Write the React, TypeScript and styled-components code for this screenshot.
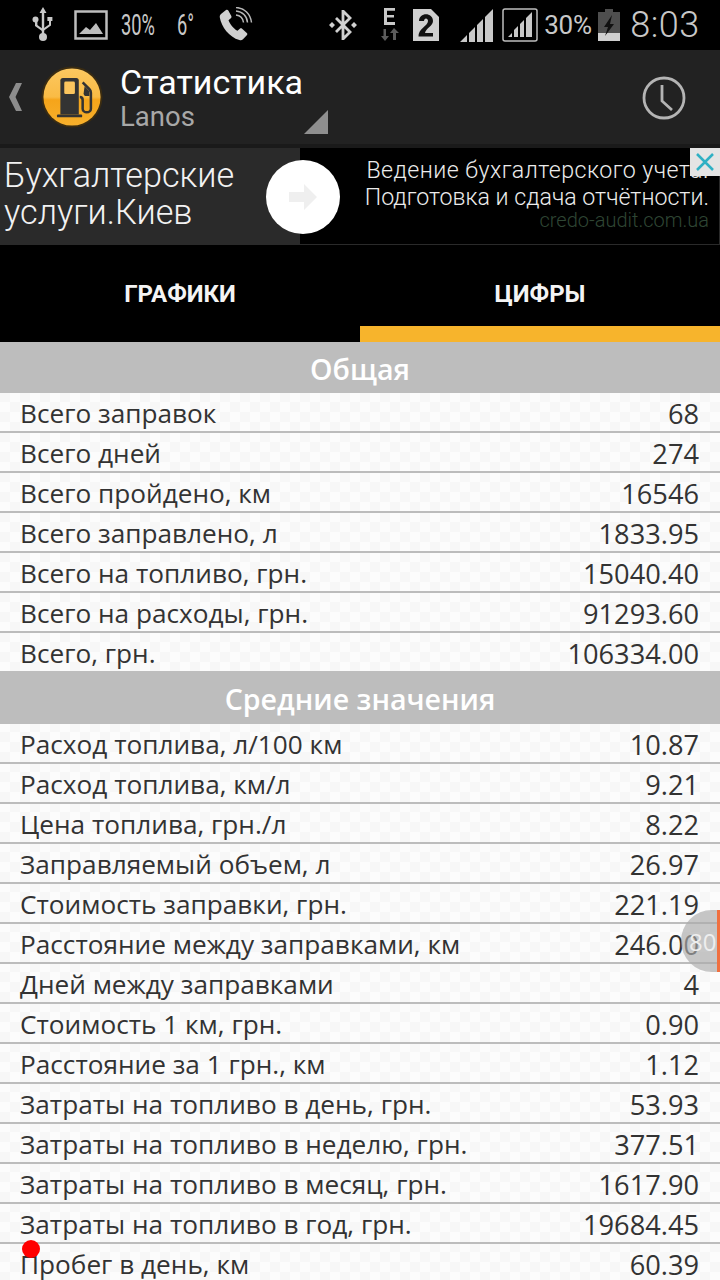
import React from 'react';
import styled, {createGlobalStyle} from 'styled-components';

const GlobalStyle = createGlobalStyle`
  html, body {
    background: #fff;
    height: 1280px;
    margin: 0;
    overflow: hidden;
    width: 720px;
  }
`;

const Page = styled.div`
  font-family: 'Open Sans', 'Liberation Sans', sans-serif;
  height: 1280px;
  overflow: hidden;
  position: relative;
  width: 720px;
`;

const StatusBar = styled.div`
  align-items: center;
  background: #000;
  color: #c8c8c8;
  display: flex;
  height: 50px;
`;

const StatusSlot = styled.div<{$left: number; $width: number}>`
  align-items: center;
  display: flex;
  flex: none;
  justify-content: center;
  margin-left: ${p => p.$left}px;
  width: ${p => p.$width}px;
`;

const NarrowText = styled.span`
  font-family: Roboto, sans-serif;
  font-size: 29px;
  transform: scaleX(.63);
  white-space: nowrap;
`;

const BatteryText = styled.span`
  font-family: Roboto, sans-serif;
  font-size: 26px;
  letter-spacing: -.3px;
`;

const Clock = styled.span`
  font-family: Roboto, sans-serif;
  font-size: 36px;
  font-weight: 300;
  letter-spacing: .5px;
`;

const ActionBar = styled.div`
  align-items: center;
  background: #222;
  display: flex;
  height: 94px;
  position: relative;
`;

const BackChevron = styled.svg`
  flex: none;
  margin-left: 8px;
`;

const AppIcon = styled.svg`
  flex: none;
  margin-left: 18px;
`;

const Titles = styled.div`
  display: flex;
  flex: 1;
  flex-direction: column;
  margin-left: 17px;
`;

const Title = styled.div`
  color: #fff;
  font-family: Roboto, sans-serif;
  font-size: 34px;
  line-height: 40px;
`;

const Subtitle = styled.div`
  color: #a8a8a8;
  font-family: Roboto, sans-serif;
  font-size: 27.5px;
  line-height: 30px;
`;

const SpinnerCorner = styled.div`
  border-bottom: 24px solid #8f8f8f;
  border-left: 24px solid transparent;
  bottom: 10px;
  height: 0;
  left: 304px;
  position: absolute;
  width: 0;
`;

const HistoryIcon = styled.svg`
  flex: none;
  margin-right: 34px;
  margin-top: 2px;
`;

const Gap = styled.div`
  background: #1a1a1a;
  height: 4px;
`;

const Ad = styled.div`
  background: #000;
  display: flex;
  font-family: Roboto, sans-serif;
  height: 97px;
  position: relative;
`;

const AdLeft = styled.div`
  background: #2a2a2a;
  color: #f2f2f2;
  font-size: 34.2px;
  font-weight: 300;
  line-height: 37px;
  padding: 9px 0 0 4px;
  width: 296px;
`;

const AdRight = styled.div`
  border: solid #2a2a2a;
  border-width: 0 1px 1px 0;
  flex: 1;
  padding: 9px 10px 0 0;
  text-align: right;
`;

const AdLine = styled.div<{$tracking?: number}>`
  color: #ececec;
  font-size: 23.2px;
  font-weight: 300;
  letter-spacing: ${p => p.$tracking || 0}px;
  line-height: 27px;
  white-space: nowrap;
`;

const AdUrl = styled.div`
  color: #2f4634;
  font-size: 20px;
  font-weight: 300;
  line-height: 18px;
`;

const AdCircle = styled.div`
  align-items: center;
  background: #fff;
  border-radius: 50%;
  display: flex;
  height: 74px;
  justify-content: center;
  left: 266px;
  position: absolute;
  top: 12px;
  width: 74px;
`;

const AdClose = styled.div`
  align-items: center;
  background: #e4e4e4;
  display: flex;
  height: 28px;
  justify-content: center;
  position: absolute;
  right: 0;
  top: 0;
  width: 30px;
`;

const Tabs = styled.div`
  background: #000;
  display: flex;
  height: 97px;
`;

const Tab = styled.div<{$active?: boolean}>`
  align-items: center;
  border-bottom: 16px solid ${p => (p.$active ? '#f7b42c' : 'transparent')};
  box-sizing: border-box;
  color: #f4f4f4;
  display: flex;
  flex: 1;
  font-family: Roboto, sans-serif;
  font-size: 24px;
  font-weight: 700;
  justify-content: center;
  padding-top: 17px;
`;

const Table = styled.div`
  background-color: #fcfcfc;
  background-image:
    linear-gradient(45deg, #f7f7f7 25%, transparent 25%, transparent 75%, #f7f7f7 75%),
    linear-gradient(45deg, #f7f7f7 25%, transparent 25%, transparent 75%, #f7f7f7 75%);
  background-position: 0 0, 10px 10px;
  background-size: 20px 20px;
`;

const SectionHeader = styled.div<{$height: number}>`
  align-items: center;
  background: #bdbdbd;
  box-sizing: border-box;
  color: #fff;
  display: flex;
  font-size: 28.6px;
  font-weight: 600;
  height: ${p => p.$height}px;
  justify-content: center;
  padding-top: 2px;
`;

const Row = styled.div`
  align-items: center;
  border-bottom: 2px solid #bcbcbc;
  box-sizing: border-box;
  color: #333;
  display: flex;
  font-size: 26.2px;
  height: 40px;
  justify-content: space-between;
  padding: 2px 21px 0 20px;
  white-space: nowrap;

  &.last {
    border-bottom: 0;
    height: 38px;
  }
`;

const RowValue = styled.span`
  font-size: 27.2px;
`;

const ScrollHandle = styled.div`
  align-items: center;
  background: rgba(170, 170, 170, .65);
  border-radius: 31px 0 0 31px;
  box-sizing: border-box;
  color: #eee;
  display: flex;
  font-size: 24px;
  height: 62px;
  left: 681px;
  padding-left: 8px;
  position: absolute;
  top: 910px;
  width: 39px;

  &::after {
    background: #f07040;
    bottom: 0;
    content: '';
    position: absolute;
    right: 0;
    top: 0;
    width: 3px;
  }
`;

const RedDot = styled.div`
  background: #f00;
  border-radius: 50%;
  height: 18px;
  left: 22px;
  position: absolute;
  top: 1240px;
  width: 18px;
`;

const general = [
  ['Всего заправок', '68'],
  ['Всего дней', '274'],
  ['Всего пройдено, км', '16546'],
  ['Всего заправлено, л', '1833.95'],
  ['Всего на топливо, грн.', '15040.40'],
  ['Всего на расходы, грн.', '91293.60'],
  ['Всего, грн.', '106334.00'],
];

const average = [
  ['Расход топлива, л/100 км', '10.87'],
  ['Расход топлива, км/л', '9.21'],
  ['Цена топлива, грн./л', '8.22'],
  ['Заправляемый объем, л', '26.97'],
  ['Стоимость заправки, грн.', '221.19'],
  ['Расстояние между заправками, км', '246.00'],
  ['Дней между заправками', '4'],
  ['Стоимость 1 км, грн.', '0.90'],
  ['Расстояние за 1 грн., км', '1.12'],
  ['Затраты на топливо в день, грн.', '53.93'],
  ['Затраты на топливо в неделю, грн.', '377.51'],
  ['Затраты на топливо в месяц, грн.', '1617.90'],
  ['Затраты на топливо в год, грн.', '19684.45'],
  ['Пробег в день, км', '60.39'],
];

function StatusIcons () {
  return (
    <StatusBar>
      <StatusSlot $left={32} $width={22}>
        <svg width="22" height="36" viewBox="0 0 22 36" fill="#c8c8c8">
          <path d="M11 0l3.5 6h-2.3v21h-2.4V6H7.5z" />
          <path d="M10 24l-7-5v-4h2.4v3l6 4.4zM12 21l5-3.6V14h-1.6v-4h5v4H19v4.4L12 23.6z" />
          <circle cx="3.5" cy="12.5" r="3" />
          <circle cx="11" cy="30" r="4" />
        </svg>
      </StatusSlot>
      <StatusSlot $left={20} $width={34}>
        <svg width="34" height="30" viewBox="0 0 34 30">
          <rect x="1.5" y="1.5" width="31" height="27" fill="none" stroke="#bdbdbd" strokeWidth="2.5" />
          <path d="M5 24l7-7 4 3 6-7 7 11z" fill="#bdbdbd" />
        </svg>
      </StatusSlot>
      <StatusSlot $left={12} $width={36}>
        <NarrowText>30%</NarrowText>
      </StatusSlot>
      <StatusSlot $left={19} $width={22}>
        <NarrowText>6°</NarrowText>
      </StatusSlot>
      <StatusSlot $left={22} $width={34}>
        <svg width="34" height="36" viewBox="0 0 34 36" fill="none">
          <path d="M2 7l5-4c1-.6 1.8-.3 2.300.5l3 5.500c.4.900.2 1.600-.5 2.200l-2.300 2c1.500 4 5 8.500 9 10.500l2.300-2c.8-.6 1.600-.6 2.300 0l4.700 4.300c.7.700.7 1.500 0 2.300l-3.800 4c-1 1-2.300 1.200-3.600.8C10 30 2.500 20 .8 10.500.6 9 1 8 2 7z" fill="#d0d0d0" />
          <path d="M17 8c4 .5 7 3.500 7.500 7.500M17 4c6.500.5 11 5 11.500 11.500M17 0.500c8.500.5 14.500 6.500 15.500 15" stroke="#b8b8b8" strokeWidth="1.500" />
        </svg>
      </StatusSlot>
      <StatusSlot $left={75} $width={30}>
        <svg width="30" height="30" viewBox="0 0 30 30" fill="none">
          <path d="M8 8l14 14-7 7V1l7 7L8 22" stroke="#d0d0d0" strokeWidth="2.800" />
          <path d="M1 15l3-3 3 3-3 3zM23 15l3-3 3 3-3 3z" fill="#d0d0d0" />
        </svg>
      </StatusSlot>
      <StatusSlot $left={23} $width={18}>
        <svg width="18" height="34" viewBox="0 0 18 34">
          <path d="M3 0h11v2.800H6v4.200h7v2.600H6v4.400h8V17H3z" fill="#c8c8c8" />
          <path d="M5 21v7h3L4 33 0 28h2.500v-7zM13 20l5 5h-3v7h-3v-7H9z" fill="#5c5c5c" />
        </svg>
      </StatusSlot>
      <StatusSlot $left={14} $width={26}>
        <svg width="26" height="32" viewBox="0 0 26 32">
          <path d="M0 0h18l8 8v24H0z" fill="#cfcfcf" />
          <path d="M6 12c0-9 14-9 14 0 0 5-7 7-8 12h8v3.500H5.500C5 20 15 17 15 12c0-3.500-4-3.500-4 0z" fill="#111" />
        </svg>
      </StatusSlot>
      <StatusSlot $left={21} $width={34}>
        <svg width="34" height="34" viewBox="0 0 34 34" fill="#c8c8c8">
          <path d="M0 34l7-7v7zM9 34V25l6-6v15zM17 34V17l6-6v23zM25 34V9l8-8v33z" />
        </svg>
      </StatusSlot>
      <StatusSlot $left={8} $width={36}>
        <svg width="36" height="34" viewBox="0 0 36 34" fill="#c8c8c8">
          <rect x="1" y="1" width="34" height="32" rx="2" fill="none" stroke="#bdbdbd" strokeWidth="1.500" />
          <path d="M6 29l4-4v4zM12 29v-7l4-4v11zM18 29V16l4-4v17zM24 29V10l6-6v25z" />
        </svg>
      </StatusSlot>
      <StatusSlot $left={6} $width={48}>
        <BatteryText>30%</BatteryText>
      </StatusSlot>
      <StatusSlot $left={6} $width={22}>
        <svg width="22" height="32" viewBox="0 0 22 32">
          <path d="M7 0h8v3h7v21H0V3h7z" fill="#4e4e4e" />
          <rect y="24" width="22" height="8" fill="#cfcfcf" />
          <path d="M14 6L6 18h4l-3 9 9-12h-4z" fill="#111" />
        </svg>
      </StatusSlot>
      <StatusSlot $left={10} $width={70}>
        <Clock>8:03</Clock>
      </StatusSlot>
    </StatusBar>
  );
}

function FuelIcon () {
  return (
    <AppIcon width="62" height="62" viewBox="0 0 64 64">
      <defs>
        <linearGradient id="fuelFace" x1="0" y1="0" x2="0" y2="1">
          <stop offset="0" stopColor="#fcc860" />
          <stop offset=".5" stopColor="#f9bb45" />
          <stop offset=".55" stopColor="#f5a41a" />
          <stop offset="1" stopColor="#f7b02c" />
        </linearGradient>
      </defs>
      <circle cx="32" cy="32" r="31.500" fill="#3a2c12" />
      <circle cx="32" cy="32" r="29.500" fill="url(#fuelFace)" />
      <path d="M20 15c0-1.500 1-2.500 2.500-2.500h14C38 12.500 39 13.500 39 15v35H20z" fill="#333" />
      <rect x="24" y="16" width="11" height="13" rx="1.500" fill="#fbc55e" />
      <rect x="16.500" y="50" width="26" height="3" rx="1" fill="#333" />
      <path d="M43 17l7 7c1 1 1.500 2 1.500 3.500V44c0 5-8.500 5-8.500 0V35c0-2-1-3-3-3" fill="none" stroke="#333" strokeWidth="2.600" />
      <path d="M45 21l5 5v5h-3c-2 0-3-1-3-3z" fill="#333" />
    </AppIcon>
  );
}

function StatRows ({rows}: {rows: string[][]}) {
  return (
    <>
      {rows.map(([label, value], index) => (
        <Row key={label} className={index === rows.length - 1 ? 'last' : undefined}>
          <span>{label}</span>
          <RowValue>{value}</RowValue>
        </Row>
      ))}
    </>
  );
}

export default function App () {
  return (
    <Page>
      <GlobalStyle />
      <StatusIcons />
      <ActionBar>
        <BackChevron width="15" height="28" viewBox="0 0 15 28">
          <path d="M8 0h6L7.500 14 14 28H8L1 14z" fill="#8c8c8c" />
        </BackChevron>
        <FuelIcon />
        <Titles>
          <Title>Статистика</Title>
          <Subtitle>Lanos</Subtitle>
        </Titles>
        <SpinnerCorner />
        <HistoryIcon width="44" height="44" viewBox="0 0 44 44" fill="none" stroke="#b4b4b4">
          <circle cx="22" cy="22" r="20" strokeWidth="2.800" />
          <path d="M20 9v16l10 9" strokeWidth="2.800" />
        </HistoryIcon>
      </ActionBar>
      <Gap />
      <Ad>
        <AdLeft>
          Бухгалтерские
          <br />
          услуги.Киев
        </AdLeft>
        <AdRight>
          <AdLine $tracking={.45}>Ведение бухгалтерского учета.</AdLine>
          <AdLine>Подготовка и сдача отчётности.</AdLine>
          <AdUrl>credo-audit.com.ua</AdUrl>
        </AdRight>
        <AdCircle>
          <svg width="28" height="26" viewBox="0 0 28 26">
            <path d="M0 8h15V0l13 13-13 13v-8H0z" fill="#efefef" />
          </svg>
        </AdCircle>
        <AdClose>
          <svg width="20" height="20" viewBox="0 0 20 20">
            <path d="M2 2l16 16M18 2L2 18" stroke="#2fb0c4" strokeWidth="2.500" />
          </svg>
        </AdClose>
      </Ad>
      <Tabs>
        <Tab>ГРАФИКИ</Tab>
        <Tab $active>ЦИФРЫ</Tab>
      </Tabs>
      <Table>
        <SectionHeader $height={51}>Общая</SectionHeader>
        <StatRows rows={general} />
        <SectionHeader $height={53}>Средние значения</SectionHeader>
        <StatRows rows={average} />
      </Table>
      <ScrollHandle>80</ScrollHandle>
      <RedDot />
    </Page>
  );
}
